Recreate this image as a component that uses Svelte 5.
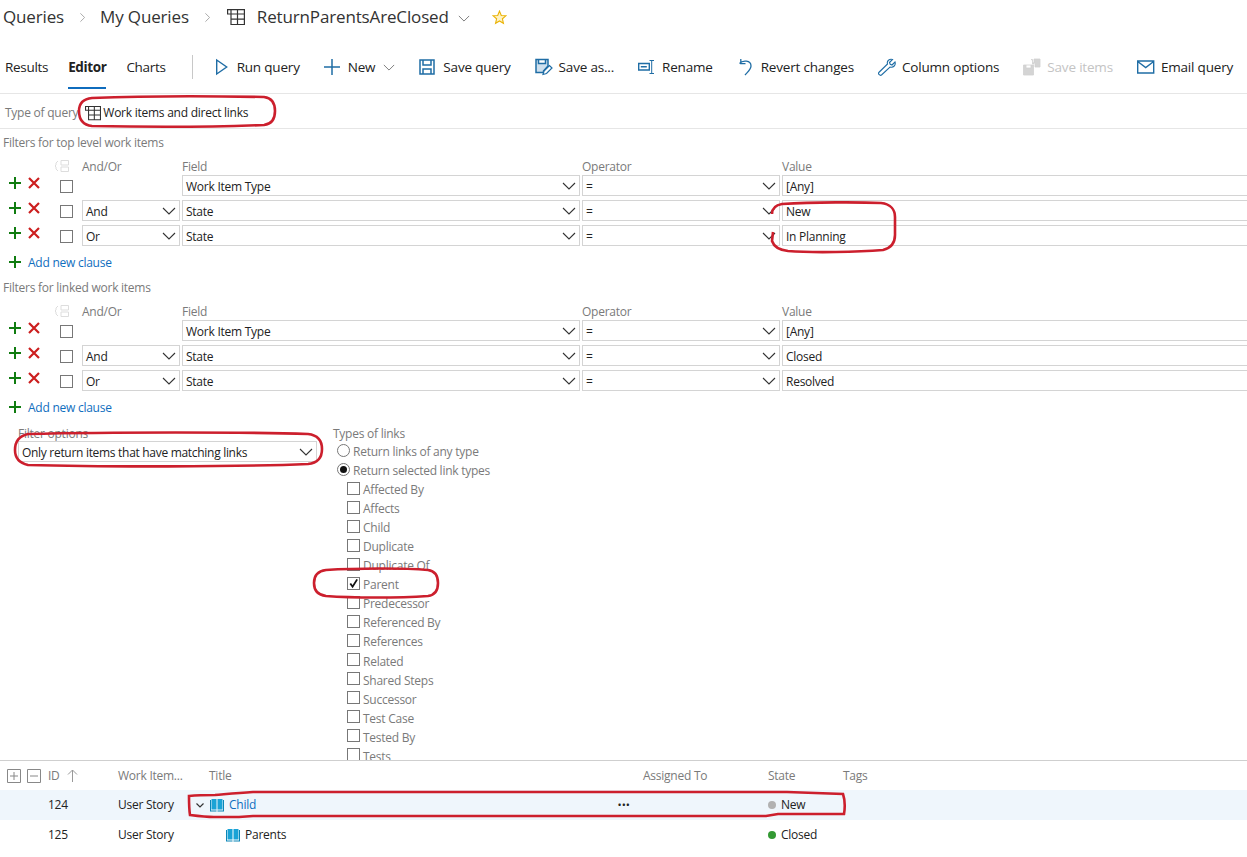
<script>
  const tools = [
    { id: 'run', label: 'Run query' },
    { id: 'new', label: 'New', chev: true },
    { id: 'save', label: 'Save query' },
    { id: 'saveas', label: 'Save as...' },
    { id: 'rename', label: 'Rename' },
    { id: 'revert', label: 'Revert changes' },
    { id: 'column', label: 'Column options' },
    { id: 'saveitems', label: 'Save items', disabled: true },
    { id: 'email', label: 'Email query' }
  ];
  const sections = [
    { title: 'Filters for top level work items', values: ['[Any]', 'New', 'In Planning'] },
    { title: 'Filters for linked work items', values: ['[Any]', 'Closed', 'Resolved'] }
  ];
  const logic = ['', 'And', 'Or'];
  const fields = ['Work Item Type', 'State', 'State'];
  const links = ['Affected By', 'Affects', 'Child', 'Duplicate', 'Duplicate Of', 'Parent', 'Predecessor', 'Referenced By', 'References', 'Related', 'Shared Steps', 'Successor', 'Test Case', 'Tested By', 'Tests'];
</script>

{#snippet chevron(cls)}
  <svg class={cls} viewBox="0 0 14 8"><path d="M1 1l6 6 6-6" fill="none" stroke="currentColor" stroke-width="1.1" /></svg>
{/snippet}
{#snippet tableIcon(cls)}
  <svg class={cls} viewBox="0 0 18 18"><path d="M.6 1.600h16.800v4.400H.6zM4 1.600v4.400M4 6v10.500h13.400V6M4 11.200h13.400M10.500 1.600v14.900" fill="none" stroke="currentColor" stroke-width="1.200" /></svg>
{/snippet}
{#snippet book(cls)}
  <svg class={cls} viewBox="0 0 14 13"><path d="M0 1h1v10.500h5.500v1H0zM14 1h-1v10.500H7.500v1H14z" fill="#0a86b8" /><path d="M1.500 0H6.500v10.500H1.500zM7.500 0h5v10.500h-5z" fill="#1aa3d6" /></svg>
{/snippet}

<div class="page">
  <header class="crumbs">
    <span>Queries</span>
    <svg class="crumb-sep" viewBox="0 0 6 12"><path d="M.5 1l5 5-5 5" fill="none" stroke="currentColor" /></svg>
    <span>My Queries</span>
    <svg class="crumb-sep" viewBox="0 0 6 12"><path d="M.5 1l5 5-5 5" fill="none" stroke="currentColor" /></svg>
    {@render tableIcon('crumb-table')}
    <span class="crumb-name">ReturnParentsAreClosed</span>
    {@render chevron('crumb-chev')}
    <svg class="star" viewBox="0 0 16 16"><path d="M8 1.200l1.900 4.600 4.900.4-3.700 3.200 1.100 4.800L8 11.700l-4.200 2.500 1.100-4.800L1.200 6.200l4.900-.4z" fill="#fff3c4" stroke="#eab308" stroke-width="1.200" /></svg>
  </header>

  <nav class="toolbar">
    <div class="tabs">
      <span>Results</span>
      <span class="active">Editor</span>
      <span>Charts</span>
    </div>
    <div class="divider"></div>
    <div class="tools">
      {#each tools as t}
        <div class="tool" class:disabled={t.disabled}>
          <svg class="ticon" viewBox="0 0 18 18" fill="none" stroke="currentColor" stroke-width="1.300">
            {#if t.id === 'run'}
              <path d="M3.700 2l10 7-10 7z" stroke-width="1.400" />
            {:else if t.id === 'new'}
              <path d="M8 1v16M0 9h16" stroke-width="1.500" />
            {:else if t.id === 'save'}
              <path d="M1 2h14v14H1zM4 2v5h8V2M4 16v-5h8v5" stroke-width="1.500" />
            {:else if t.id === 'saveas'}
              <path d="M1 1.500h12v6.500L8.500 13v1.500H1zM3.500 1.500v4h7v-4" fill="#cfe0ee" stroke-width="1.500" />
              <path d="M8 16.500l1-3.500 5.500-5.500 2.500 2.500L11.500 15.500z" fill="#fff" stroke-width="1.200" />
            {:else if t.id === 'rename'}
              <path d="M.7 5.500h10.600v6.500H.7zM2.800 8.700h6" stroke-width="1.400" />
              <path d="M11.500 2.500h4.500M11.500 15.500h4.500M13.700 2.500v13" stroke-width="1" />
            {:else if t.id === 'revert'}
              <path d="M2.500 5.500c3-3.500 11.500-3.500 11.500 2.500 0 3.500-3.500 6-6 9M3.800 1v4.700h4.700" />
            {:else if t.id === 'column'}
              <path d="M.8 14.500L9.500 6c-1-3 2-5.500 5-4.500L11.500 4.500l.7 1.800 1.800.7 3-3c1 3-1.500 6-5 5L3.500 17c-1.500 1-3.700-1-2.700-2.500z" stroke-width="1.100" />
            {:else if t.id === 'saveitems'}
              <path d="M.5 7h10v10H.5zM3 7v3h5V7M8 1.500h1.500V6h1.500V1h6v8h-5V6" fill="#d4d4d4" stroke="#d0d0d0" stroke-width=".8" />
            {:else if t.id === 'email'}
              <path d="M.7 3h16v12H.7zM.7 3.500l8 6 8-6" stroke-width="1.400" />
            {/if}
          </svg>
          <span>{t.label}</span>
          {#if t.chev}{@render chevron('tool-chev')}{/if}
        </div>
      {/each}
    </div>
  </nav>

  <div class="type-row">
    <span class="muted">Type of query</span>
    {@render tableIcon('type-icon')}
    <span>Work items and direct links</span>
  </div>

  <main class="editor">
    {#each sections as s}
      <section class="filters">
        <div class="line title muted">{s.title}</div>
        <div class="grid head muted">
          <div class="ctl">
            <svg class="group-icon" viewBox="0 0 14 12"><path d="M3 1L1 3v2L0 6l1 1v2l2 2M6 .5h7.500v4.500H6zM6 7h7.500v4.500H6z" fill="none" stroke="#ddd" /></svg>
          </div>
          <span>And/Or</span><span>Field</span><span>Operator</span><span>Value</span>
        </div>
        {#each s.values as v, i}
          <div class="grid row">
            <div class="ctl">
              <svg class="add" viewBox="0 0 12 12"><path d="M6 0v12M0 6h12" stroke="#107c10" stroke-width="2" /></svg>
              <svg class="del" viewBox="0 0 12 12"><path d="M1 1l10 10M11 1L1 11" stroke="#cc1f1f" stroke-width="2.200" /></svg>
              <span class="box"></span>
            </div>
            {#if logic[i]}
              <div class="input">{logic[i]}{@render chevron('sel-chev')}</div>
            {:else}
              <div></div>
            {/if}
            <div class="input">{fields[i]}{@render chevron('sel-chev')}</div>
            <div class="input">={@render chevron('sel-chev')}</div>
            <div class="input value">{v}</div>
          </div>
        {/each}
        <div class="line addclause">
          <svg class="add" viewBox="0 0 12 12"><path d="M6 0v12M0 6h12" stroke="#107c10" stroke-width="2" /></svg>
          <span>Add new clause</span>
        </div>
      </section>
    {/each}

    <section class="options">
      <div class="opt-left">
        <div class="opt-label left-label muted">Filter options</div>
        <div class="input big">Only return items that have matching links{@render chevron('sel-chev')}</div>
      </div>
      <div class="opt-right">
        <div class="opt-label muted">Types of links</div>
        <div class="link radio muted"><span class="rad"></span>Return links of any type</div>
        <div class="link radio muted"><span class="rad on"></span>Return selected link types</div>
        {#each links as l}
          <div class="link check muted">
            <span class="box" class:checked={l === 'Parent'}>
              {#if l === 'Parent'}<svg viewBox="0 0 12 12"><path d="M2.500 6l2.500 3.500L10 1.500" fill="none" stroke="#111" stroke-width="2" /></svg>{/if}
            </span>{l}
          </div>
        {/each}
      </div>
    </section>
  </main>

  <section class="results">
    <div class="rgrid rhead muted">
      <div class="expand">
        <svg viewBox="0 0 14 14"><path d="M.5.500h13v13H.500zM3 7h8M7 3v8" fill="none" stroke="#888" /></svg>
        <svg viewBox="0 0 14 14"><path d="M.5.500h13v13H.500zM3 7h8" fill="none" stroke="#888" /></svg>
      </div>
      <div class="idh">ID<svg viewBox="0 0 11 13"><path d="M5.500 13V1M1 5.500l4.500-4.500 4.500 4.500" fill="none" stroke="#999" /></svg></div>
      <span>Work Item...</span>
      <span>Title</span>
      <span>Assigned To</span>
      <span>State</span>
      <span>Tags</span>
    </div>
    <div class="rgrid rrow selected">
      <span></span>
      <span>124</span>
      <span>User Story</span>
      <div class="title-cell child">
        <svg class="mini-chev" viewBox="0 0 8 5"><path d="M.5.500L4 4 7.500.500" fill="none" stroke="#333" stroke-width="1.200" /></svg>
        {@render book('book')}
        <span class="link-text">Child</span>
        <span class="dots">•••</span>
      </div>
      <span></span>
      <div class="state"><i class="dot grey"></i>New</div>
      <span></span>
    </div>
    <div class="rgrid rrow">
      <span></span>
      <span>125</span>
      <span>User Story</span>
      <div class="title-cell parent">
        {@render book('book')}
        <span>Parents</span>
      </div>
      <span></span>
      <div class="state"><i class="dot green"></i>Closed</div>
      <span></span>
    </div>
  </section>

  <svg class="ink" viewBox="0 0 1247 857" fill="none" stroke="#cc1f2d" stroke-width="2.600">
    <path d="M92 98c50-2 120-2 172-1 8 1 11 6 11 14 0 8-3 13-11 14-50 2-125 2-172 1-9-1-13-7-13-15 0-7 4-12 13-13z" />
    <path d="M772 214c0-6 4-9 10-10 32-2 78-2 99-1 10 1 14 7 14 14v18c0 8-4 13-12 15-25 2-70 3-95 1-9-1-14-4-16-10l1-9" />
    <path d="M28 434c80-2 220-2 280 0 9 1 14 6 14 15 0 9-4 14-14 15-70 3-210 3-280 1-9-2-13-7-13-15 0-9 4-14 13-16z" />
    <path d="M326 570c30-2 80-2 102 0 7 1 10 6 10 13 0 7-3 12-10 13-30 2-75 2-102 0-8-1-12-6-12-13 0-7 4-12 12-13z" />
    <path d="M189 796c10-1 18-1 26-1 12-1 22-2 38-3h534l56 2c2 6 2 14 1 20h-66l-12 2H253l-14 1h-25c-8 0-16-1-24-2-1-6-1-13-1-19z" />
  </svg>
</div>

<style>
  :global(body) { margin: 0; background: #fff; }
  .page {
    position: relative;
    width: 1247px;
    height: 857px;
    overflow: hidden;
    display: flex;
    flex-direction: column;
    font: 12px/18px "Open Sans", "Noto Sans", sans-serif;
    letter-spacing: -0.25px;
    color: #222;
  }
  .muted { color: #7a7a7a; }

  .crumbs {
    height: 34px;
    flex: none;
    display: flex;
    align-items: center;
    padding-left: 3px;
    font-size: 17px;
    letter-spacing: -0.15px;
    color: #333;
  }
  .crumb-sep { width: 5px; height: 11px; margin: 0 15px 0 16px; color: #999; }
  .crumb-table { width: 18px; height: 18px; margin: 0 12px 0 2px; color: #333; }
  .crumb-chev { width: 12px; height: 7px; margin: 2px 22px 0 9px; color: #777; }
  .star { width: 15px; height: 15px; }

  .toolbar {
    height: 46px;
    margin-top: 14px;
    flex: none;
    display: flex;
    align-items: flex-start;
    padding-left: 5px;
    box-sizing: border-box;
    border-bottom: 1px solid #e6e6e6;
    font-size: 13.500px;
    letter-spacing: -0.19px;
  }
  .tabs { display: flex; gap: 20px; height: 45px; line-height: 38px; letter-spacing: -0.3px; }
  .tabs span { height: 40px; }
  .tabs .active { font-weight: 700; letter-spacing: -0.4px; border-bottom: 2px solid #0f6cbd; height: 41px; box-sizing: border-box; }
  .divider { width: 1px; height: 24px; margin: 7px 20px 0 26px; background: #c8c8c8; }
  .tools { display: flex; gap: 24px; height: 38px; align-items: center; }
  .tool { display: flex; align-items: center; gap: 6px; white-space: nowrap; }
  .ticon { width: 18px; height: 18px; color: #1f6da5; flex: none; }
  .tool.disabled { color: #c4c4c4; }
  .tool.disabled .ticon { color: #ccc; }
  .tool-chev { width: 12px; height: 7px; margin-left: 2px; color: #777; }

  .type-row {
    height: 35px;
    flex: none;
    box-sizing: border-box;
    border-bottom: 1px solid #e6e6e6;
    display: flex;
    align-items: center;
    padding: 3px 0 0 5px;
  }
  .type-icon { width: 16px; height: 16px; margin: 0 2px 0 7px; color: #333; }

  .editor { flex: 1; min-height: 0; overflow: hidden; }
  .filters { padding-top: 5px; height: 145px; box-sizing: border-box; }
  .line { padding-left: 3px; height: 18px; }
  .grid {
    display: grid;
    grid-template-columns: 80px 98px 398px 198px 480px;
    column-gap: 2px;
  }
  .head { margin-top: 5px; height: 18px; line-height: 20px; }
  .row { height: 21px; margin-bottom: 4px; }
  .ctl { display: flex; align-items: flex-start; position: relative; padding-left: 9px; }
  .group-icon { width: 14px; height: 12px; position: absolute; left: 55px; top: 3px; }
  .add { width: 12px; height: 12px; flex: none; }
  .del { width: 12px; height: 12px; margin-left: 7px; flex: none; }
  .ctl .add, .ctl .del { margin-top: 2px; }
  .box {
    width: 13px;
    height: 13px;
    box-sizing: border-box;
    border: 1px solid #777;
    background: #fff;
    flex: none;
    display: block;
  }
  .ctl .box { margin: 5px 0 0 20px; }
  .input {
    position: relative;
    height: 21px;
    box-sizing: border-box;
    border: 1px solid #d4d4d4;
    padding: 2px 0 0 3px;
    line-height: 18px;
    white-space: nowrap;
  }
  .sel-chev { position: absolute; right: 3px; top: 6px; width: 14px; height: 8px; color: #333; }
  .addclause { display: flex; align-items: center; gap: 7px; margin-top: 7px; padding-left: 9px; color: #106ebe; }
  .addclause span { padding-top: 2px; }
  .addclause .add { margin-top: -1px; }

  .options { display: flex; gap: 16px; padding: 7px 0 0 18px; }
  .opt-left { width: 299px; }
  .opt-label { height: 16px; line-height: 16px; }
  .left-label { height: 15px; }
  .big { letter-spacing: -0.3px; }
  .opt-right { flex: 1; }
  .link { height: 19.050px; line-height: 19.050px; display: flex; align-items: center; white-space: nowrap; }
  .radio { padding-left: 4px; gap: 3px; }
  .rad {
    width: 13px;
    height: 13px;
    margin-top: -2px;
    box-sizing: border-box;
    border: 1px solid #777;
    border-radius: 50%;
    display: block;
    position: relative;
  }
  .rad.on::after {
    content: "";
    position: absolute;
    inset: 2px;
    background: #111;
    border-radius: 50%;
  }
  .check { padding-left: 14px; gap: 3px; }
  .check .box { margin-top: -3px; }
  .checked svg { width: 11px; height: 11px; display: block; }

  .results {
    height: 97px;
    flex: none;
    box-sizing: border-box;
    border-top: 1px solid #cfcfcf;
    background: #fff;
  }
  .rgrid {
    display: grid;
    grid-template-columns: 48px 70px 91px 434px 125px 75px 1fr;
    align-items: center;
  }
  .rhead { height: 29px; }
  .expand { display: flex; gap: 6px; padding-left: 7px; }
  .expand svg { width: 14px; height: 14px; }
  .idh { display: flex; align-items: center; gap: 7px; }
  .idh svg { width: 11px; height: 13px; }
  .rrow { height: 30px; }
  .selected { background: #eff6fc; }
  .title-cell { display: flex; align-items: center; }
  .child { margin-left: -13px; }
  .parent { padding-left: 17px; }
  .mini-chev { width: 8px; height: 5px; margin-right: 6px; }
  .book { width: 14px; height: 13px; margin-right: 5px; }
  .link-text { color: #106ebe; }
  .dots { margin-left: auto; padding-right: 13px; font-size: 11px; letter-spacing: 0; color: #222; }
  .state { display: flex; align-items: center; gap: 5px; }
  .dot { width: 8px; height: 8px; border-radius: 50%; display: block; }
  .grey { background: #b2b2b2; }
  .green { background: #339933; }

  .ink { position: absolute; inset: 0; width: 1247px; height: 857px; pointer-events: none; }
</style>
